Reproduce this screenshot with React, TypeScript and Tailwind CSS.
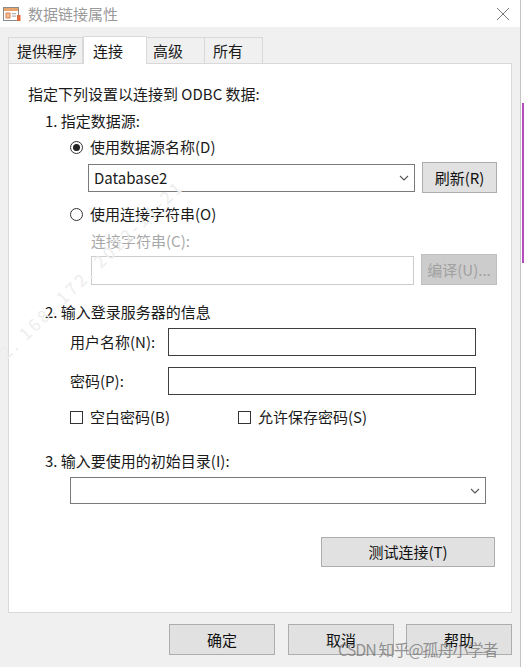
import React from "react";

function Radio({ checked }: { checked?: boolean }) {
  return (
    <span className="w-[13px] h-[13px] rounded-full border border-[#333] bg-white flex items-center justify-center shrink-0">
      {checked && <span className="w-[7px] h-[7px] rounded-full bg-[#222]" />}
    </span>
  );
}

function Check() {
  return <span className="w-[13px] h-[13px] border border-[#333] bg-white shrink-0" />;
}

function Chevron() {
  return (
    <svg width="10" height="6" viewBox="0 0 10 6" className="shrink-0">
      <path d="M1 1 L5 5 L9 1" fill="none" stroke="#555" strokeWidth="1.1" />
    </svg>
  );
}

function Btn({ children, cls, disabled }: { children: React.ReactNode; cls: string; disabled?: boolean }) {
  return (
    <div
      className={
        "flex items-center justify-center border shrink-0 " +
        (disabled ? "bg-[#cccccc] border-[#bfbfbf] text-[#a0a0a0] " : "bg-[#e1e1e1] border-[#adadad] text-[#111] ") +
        cls
      }
    >
      {children}
    </div>
  );
}

export default function App() {
  return (
    <div className="relative w-[524px] h-[667px] bg-white overflow-hidden font-['Noto_Sans_CJK_SC','Noto_Sans',sans-serif] text-[15px] leading-[20px] text-[#1a1a1a]">
      <div className="w-[521px] h-full border-r border-[#c4c4c4] flex flex-col">
        {/* title bar */}
        <div className="h-[27px] bg-white flex items-center shrink-0">
          <svg width="18" height="16" viewBox="0 0 18 16" className="ml-[3px] mt-[1px]">
            <rect x="0.5" y="1.5" width="15" height="13" fill="#fff" stroke="#8a8a8a" />
            <rect x="1" y="2" width="14" height="3" fill="#e9a46b" />
            <rect x="3" y="7" width="4" height="5" fill="#f2c29a" stroke="#d26b3b" strokeWidth="0.8" />
            <rect x="9" y="7" width="4" height="1.2" fill="#b0b0b0" />
            <rect x="9" y="9.5" width="4" height="1.2" fill="#b0b0b0" />
            <rect x="14" y="9" width="3.5" height="6" fill="#e06a3a" />
          </svg>
          <span className="ml-[7px] text-[#9a9a9a] text-[15px]">数据链接属性</span>
          <svg width="14" height="14" viewBox="0 0 14 14" className="ml-auto mr-[10px]">
            <path d="M1 1 L13 13 M13 1 L1 13" stroke="#7a7a7a" strokeWidth="1" />
          </svg>
        </div>

        {/* body */}
        <div className="flex-1 bg-[#f0f0f0] pl-[8px] pt-[10px] flex flex-col">
          {/* tabs */}
          <div className="flex h-[26px] items-end">
            <div className="w-[75px] h-[26px] border border-[#d9d9d9] border-b-0 bg-[#f0f0f0] flex items-center pl-[8px]">提供程序</div>
            <div className="w-[64px] h-[28px] -mb-[1px] border border-[#d9d9d9] border-b-0 bg-white flex items-center pl-[9px] relative z-10">连接</div>
            <div className="w-[58px] h-[26px] border border-[#d9d9d9] border-b-0 border-l-0 bg-[#f0f0f0] flex items-center pl-[6px]">高级</div>
            <div className="w-[58px] h-[26px] border border-[#d9d9d9] border-b-0 border-l-0 bg-[#f0f0f0] flex items-center pl-[8px]">所有</div>
          </div>

          {/* panel */}
          <div className="w-[504px] h-[550px] bg-white border border-[#d9d9d9] pl-[19px] pt-[20px] flex flex-col">
            <div className="h-[20px]">指定下列设置以连接到 ODBC 数据:</div>
            <div className="h-[20px] mt-[7px] ml-[17px]">1. 指定数据源:</div>
            <div className="h-[20px] mt-[6px] ml-[42px] flex items-center gap-[7px]">
              <Radio checked />
              <span>使用数据源名称(D)</span>
            </div>
            <div className="h-[31px] mt-[5px] ml-[60px] flex items-center">
              <div className="w-[327px] h-[28px] border border-[#7a7a7a] bg-white flex items-center pl-[5px] pr-[5px]">
                <span className="flex-1">Database2</span>
                <Chevron />
              </div>
              <Btn cls="w-[75px] h-[31px] ml-[7px]">刷新(R)</Btn>
            </div>
            <div className="h-[20px] mt-[11px] ml-[42px] flex items-center gap-[7px]">
              <Radio />
              <span>使用连接字符串(O)</span>
            </div>
            <div className="h-[20px] mt-[7px] ml-[63px] text-[#a8a8a8]">连接字符串(C):</div>
            <div className="h-[31px] mt-[3px] ml-[63px] flex items-end">
              <div className="w-[323px] h-[29px] border border-[#cccccc] bg-white" />
              <Btn disabled cls="w-[76px] h-[31px] ml-[7px]">编译(U)...</Btn>
            </div>
            <div className="h-[20px] mt-[17px] ml-[17px]">2. 输入登录服务器的信息</div>
            <div className="h-[28px] mt-[6px] ml-[42px] flex items-center">
              <span className="w-[98px]">用户名称(N):</span>
              <div className="w-[308px] h-[28px] border border-[#3f3f3f] bg-white" />
            </div>
            <div className="h-[28px] mt-[11px] ml-[42px] flex items-center">
              <span className="w-[98px]">密码(P):</span>
              <div className="w-[308px] h-[28px] border border-[#3f3f3f] bg-white" />
            </div>
            <div className="h-[20px] mt-[12px] ml-[42px] flex items-center">
              <Check />
              <span className="ml-[7px] w-[148px]">空白密码(B)</span>
              <Check />
              <span className="ml-[7px]">允许保存密码(S)</span>
            </div>
            <div className="h-[20px] mt-[24px] ml-[17px]">3. 输入要使用的初始目录(I):</div>
            <div className="w-[416px] h-[27px] mt-[6px] ml-[42px] border border-[#7a7a7a] bg-white flex items-center justify-end pr-[5px]">
              <Chevron />
            </div>
            <div className="flex justify-end pr-[16px] mt-[33px]">
              <Btn cls="w-[174px] h-[30px]">测试连接(T)</Btn>
            </div>
          </div>

          {/* bottom buttons */}
          <div className="flex mt-[11px] pl-[161px]">
            <Btn cls="w-[106px] h-[31px]">确定</Btn>
            <Btn cls="w-[106px] h-[31px] ml-[13px]">取消</Btn>
            <Btn cls="w-[106px] h-[31px] ml-[12px]">帮助</Btn>
          </div>
        </div>
      </div>

      {/* magenta edge of a window behind */}
      <div className="absolute left-[522px] top-[103px] w-[2px] h-[160px] bg-[#b44cc0]" />

      {/* watermarks */}
      <div className="absolute left-[2px] top-[345px] -rotate-[44deg] origin-left text-[#ededed] text-[17px] leading-[20px] tracking-[3px] whitespace-nowrap pointer-events-none">
        2. 168. 172. 2022-11-21
      </div>
      <div className="absolute left-[338px] top-[638px] text-[16px] leading-[22px] tracking-[-1px] text-[#6b6b6b]/70 whitespace-nowrap pointer-events-none">
        CSDN 知乎@孤舟小学者
      </div>
    </div>
  );
}
